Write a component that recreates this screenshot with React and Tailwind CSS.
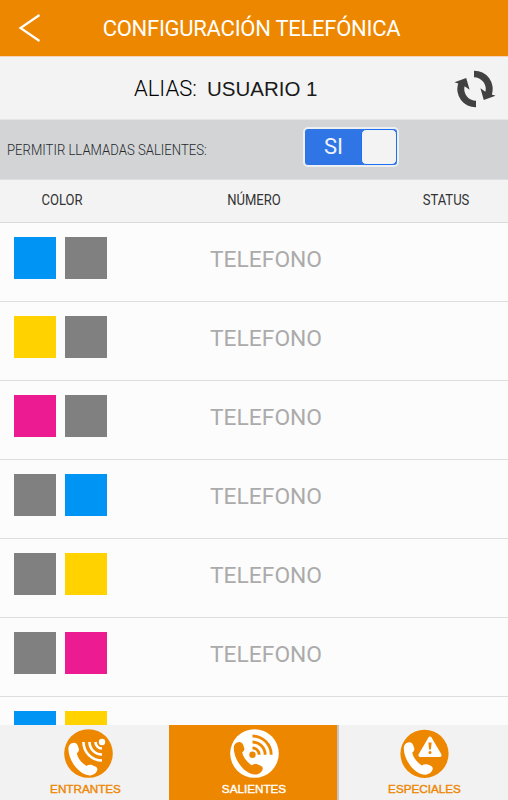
const COLORS = {
  blue: 'bg-[#0094f4]',
  yellow: 'bg-[#ffd200]',
  pink: 'bg-[#ed1b92]',
  gray: 'bg-[#808080]',
}

const ROWS = [
  ['blue', 'gray'],
  ['yellow', 'gray'],
  ['pink', 'gray'],
  ['gray', 'blue'],
  ['gray', 'yellow'],
  ['gray', 'pink'],
  ['blue', 'yellow'],
]

const HANDSET =
  'M8.8 14C11.2 13.4 13 14.6 13.8 16.8L14.8 19.8C15.4 21.8 14.2 23.2 12.8 24.4C14 29.4 17.4 33.8 22.4 37C24.2 35.8 26.2 35.4 28.4 36.2C31 37 33.6 38.2 33.4 40.2C33.2 43 29.8 46.4 26 46.4C14.6 46 4.2 31 4.4 19.4C4.4 16.4 6.4 14.4 8.8 14Z'

function IncomingIcon() {
  return (
    <svg viewBox="0 0 49 49" className="ml-[6px] size-[49px]">
      <circle cx="24.5" cy="24.5" r="24.3" fill="#ee8700" />
      <path d={HANDSET} fill="#fff" />
      <circle cx="38" cy="13" r="3.2" fill="#fff" />
      <g fill="none" stroke="#fff" strokeWidth="2.6">
        <path d="M31.5 13A6.5 6.5 0 0 0 38 19.5" />
        <path d="M25.5 13A12.5 12.5 0 0 0 38 25.5" />
        <path d="M19.5 13A18.5 18.5 0 0 0 38 31.5" />
      </g>
    </svg>
  )
}

function OutgoingIcon() {
  return (
    <svg viewBox="0 0 49 49" className="size-[49px]">
      <circle cx="24.5" cy="24.5" r="24.3" fill="#fff" />
      <path d={HANDSET} transform="translate(-0.6 -0.8)" fill="#ee8700" />
      <circle cx="22.5" cy="25.7" r="3.2" fill="#ee8700" />
      <g fill="none" stroke="#ee8700" strokeWidth="2.8">
        <path d="M22.5 19A6.7 6.7 0 0 1 29.2 25.7" />
        <path d="M22.5 13A12.7 12.7 0 0 1 35.2 25.7" />
        <path d="M22.5 7A18.7 18.7 0 0 1 41.2 25.7" />
      </g>
    </svg>
  )
}

function SpecialIcon() {
  return (
    <svg viewBox="0 0 49 49" className="size-[49px]">
      <circle cx="24.5" cy="24.8" r="24.1" fill="#ee8700" />
      <path d={HANDSET} transform="translate(-0.6 -0.6)" fill="#fff" />
      <path d="M30 9.4L39.8 26.2H20.2Z" fill="#fff" stroke="#fff" strokeWidth="3.6" strokeLinejoin="round" />
      <path d="M28.4 13.4H31.6L30.9 20.6H29.1Z" fill="#ee8700" />
      <circle cx="30" cy="23.4" r="1.5" fill="#ee8700" />
    </svg>
  )
}

function RefreshIcon() {
  const arrow =
    'M19 0.8A18.2 18.2 0 0 1 36.8 24.6L40.5 25.8L28.8 30L25.4 18.2L30.4 21.8A11.8 11.8 0 0 0 19 7.2Z'
  return (
    <svg viewBox="-1 0 42 38" className="h-[38px] w-[42px]" fill="#414141">
      <path d={arrow} />
      <path d={arrow} transform="rotate(180 20 19)" />
    </svg>
  )
}

const TABS = [
  { label: 'ENTRANTES', icon: IncomingIcon },
  { label: 'SALIENTES', icon: OutgoingIcon, active: true },
  { label: 'ESPECIALES', icon: SpecialIcon },
]

export default function App() {
  return (
    <div className="flex h-[800px] w-[508px] flex-col overflow-hidden bg-[#fcfcfc] font-[Roboto,sans-serif]">
      {/* Title bar */}
      <header className="grid h-[57px] shrink-0 grid-cols-[100px_1fr_106px] items-center border-b border-[#f3d3c0] bg-[#ee8700]">
        <button type="button" className="pl-[18px]">
          <svg viewBox="0 0 24 30" className="h-[30px] w-6" fill="none" stroke="#fff" strokeWidth="2.2">
            <path d="M21.5 2L2.5 15L21.5 28" />
          </svg>
        </button>
        <h1 className="pt-px pl-px text-center text-[22px] leading-none tracking-[-0.27px] whitespace-nowrap text-white">
          CONFIGURACIÓN TELEFÓNICA
        </h1>
      </header>

      {/* Alias */}
      <section className="flex h-[63px] shrink-0 items-center border-b border-[#e6e6e6] bg-[#f3f3f3] pl-[134px]">
        <span className="w-[73px] pt-[2px] text-[22px] leading-none font-light text-black">ALIAS:</span>
        <span className="pt-[2px] font-['Liberation_Sans',sans-serif] text-[20.5px] leading-none text-[#1a1a1a]">USUARIO 1</span>
        <button type="button" className="mt-[2px] mr-[12px] ml-auto">
          <RefreshIcon />
        </button>
      </section>

      {/* Outgoing calls switch */}
      <section className="flex h-[60px] shrink-0 items-center border-b border-[#dedfe0] bg-[#d2d4d6] pl-[7px]">
        <div className="w-[296px]">
          <span className="inline-block origin-left scale-x-[0.875] text-[15px] leading-none font-light whitespace-nowrap text-[#25292b]">
            PERMITIR LLAMADAS SALIENTES:
          </span>
        </div>
        <div className="mb-[5px] flex h-10 w-24 rounded-[5px] border-2 border-[#eeeff1] bg-[#3075e6]">
          <span className="flex flex-1 items-center justify-center pl-px text-[22px] leading-none text-[#eef3fc]">SI</span>
          <span className="h-full w-[36px] rounded-[5px] border border-[#1b6ff0] bg-[#f3f3f3]" />
        </div>
      </section>

      {/* Column names */}
      <div className="grid h-[43px] shrink-0 grid-cols-[124px_260px_124px] items-center border-b border-[#dadada] bg-[#f3f3f3] pb-[2px] text-center text-[15px] leading-none text-[#333]">
        <span className="scale-x-[0.87]">COLOR</span>
        <span className="scale-x-[0.87]">NÚMERO</span>
        <span className="scale-x-[0.87]">STATUS</span>
      </div>

      {/* Phone list */}
      <ul className="min-h-0 flex-1 overflow-hidden">
        {ROWS.map(([first, second], i) => (
          <li key={i} className="flex h-[79px] items-start border-b border-[#dedede] pt-[14px] pl-[14px]">
            <span className={`mr-[9px] size-[42px] ${COLORS[first]}`} />
            <span className={`size-[42px] ${COLORS[second]}`} />
            {i < 6 && (
              <span className="ml-[103px] pt-[12px] text-[22.8px] leading-none text-[#ababab]">TELEFONO</span>
            )}
          </li>
        ))}
      </ul>

      {/* Bottom tabs */}
      <nav className="grid h-[75px] shrink-0 grid-cols-[169px_170px_169px] bg-[#f2f2f2]">
        {TABS.map(({ label, icon: Icon, active }) => (
          <button
            key={label}
            type="button"
            className={`flex flex-col items-center pt-[4px] pl-[2px] font-['Liberation_Sans',sans-serif] text-[11.7px] leading-none ${
              active ? 'border-r-2 border-[#c9c5c0] bg-[#ee8700] text-white' : 'text-[#ee8700]'
            }`}
          >
            <Icon />
            <span className="mt-[5px] [-webkit-text-stroke:0.4px_currentColor]">{label}</span>
          </button>
        ))}
      </nav>
    </div>
  )
}
